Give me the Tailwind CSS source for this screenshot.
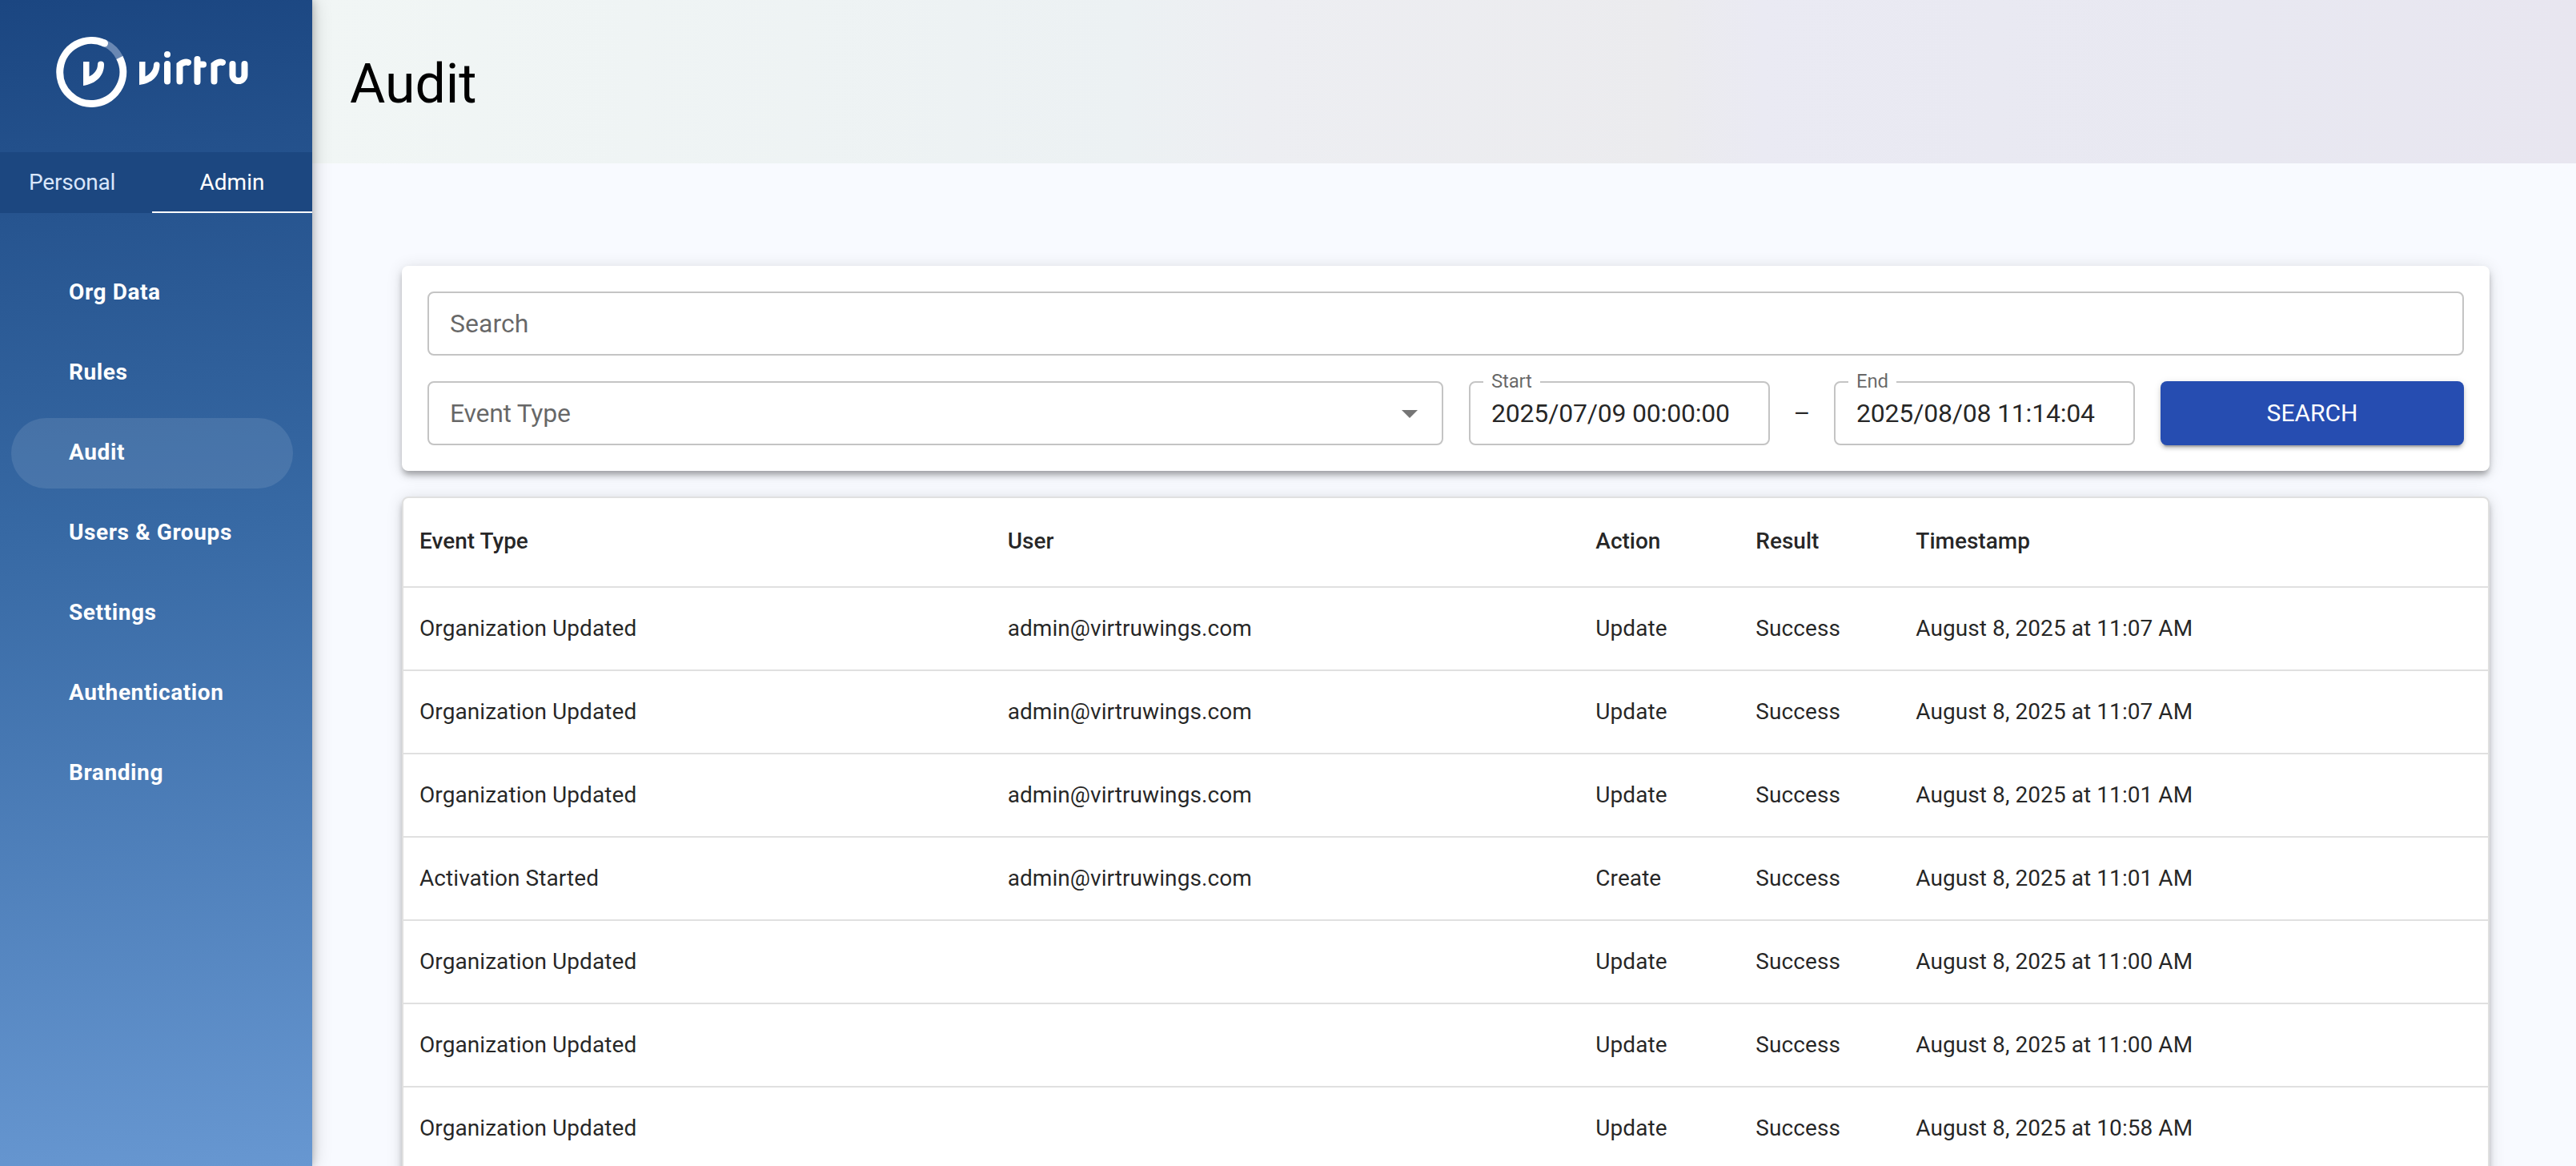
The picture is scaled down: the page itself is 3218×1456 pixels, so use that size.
<!DOCTYPE html>
<html lang="en">
<head>
  <meta charset="UTF-8">
  <title>Audit</title>
  <script src="https://cdn.jsdelivr.net/npm/@tailwindcss/browser@4"></script>
</head>
<body class="bg-[#f8faff] text-black/87 font-[Roboto,sans-serif]">

  <div class="flex h-[1456px] overflow-hidden">

    <!-- Sidebar -->
    <aside class="relative z-10 w-[390px] shrink-0 text-white bg-linear-[175deg] from-[#1b4681] via-[#3769a4] via-45% to-[#6797d1] shadow-[0_0_10px_rgba(0,0,0,0.25),0_0_24px_rgba(0,0,0,0.2)]">
      <div class="h-[190px] pt-[46px] pl-[70px]">
        <svg class="w-[240px] h-[88px]" viewBox="0 0 240 88" fill="none" stroke="#fff" stroke-width="8" stroke-linecap="round">
          <path d="M61 8 A39.5 39.5 0 0 1 80 27" stroke="#6a88b3" stroke-width="9" stroke-linecap="butt" />
          <path d="M60.5 8 A39.5 39.5 0 1 0 79.4 26" stroke-width="9" stroke-linecap="butt" />
          <circle cx="60.5" cy="8" r="4.5" fill="#fff" stroke="none" />
          <path d="M34 31h7.5v18.5c6-3 10.500-8 10.500-15a4 4 0 0 1 8 0C60 49 50 58.500 34 61z" fill="#fff" stroke="none" />
          <path d="M104 31h7.500v18.500c6-3 10.500-8 10.500-15a3.800 3.800 0 0 1 7.500 0C129.500 49 120 58 104 60z" fill="#fff" stroke="none" />
          <circle cx="139" cy="22" r="4" fill="#fff" stroke="none" />
          <path d="M139 34v21.500M154.500 55.500V35q6-4.500 10.500-3M176.500 28v28M176.500 34.500H184M197.500 55.500V35q6-4.500 10.500-3M220.500 34v13.500a7.500 7.500 0 0 0 15 0V34" />
        </svg>
      </div>
      <div class="flex h-[76px] bg-[#1c4780] text-[28px] leading-[76px]">
        <div class="w-[190px] pl-9 tracking-[-0.2px] text-[#d9e6fb]">Personal</div>
        <div class="w-[200px] text-center border-b-2 border-white">Admin</div>
      </div>
      <nav class="flex flex-col gap-3 mt-[56px] pl-[14px] pr-6 text-[28px] leading-[86px] font-bold tracking-[0.6px]">
        <a class="h-[88px] pl-[72px]">Org Data</a>
        <a class="h-[88px] pl-[72px]">Rules</a>
        <a class="h-[88px] pl-[72px] rounded-full bg-white/10">Audit</a>
        <a class="h-[88px] pl-[72px]">Users &amp; Groups</a>
        <a class="h-[88px] pl-[72px]">Settings</a>
        <a class="h-[88px] pl-[72px]">Authentication</a>
        <a class="h-[88px] pl-[72px]">Branding</a>
      </nav>
    </aside>

    <main class="flex-1">
      <header class="h-[204px] pl-[47px] bg-[linear-gradient(90deg,#f1f6f5,#ecf1f3_36%,#edeef2_42%,#ebebee_60%,#eaeaf3_64%,#e8e8f1_85%,#e8e6f0)]">
        <h1 class="text-[68px] leading-[210px] text-black">Audit</h1>
      </header>

      <div class="mt-32 ml-[112px] mr-[108px]">
        <!-- Filters -->
        <section class="h-[256px] p-8 rounded-lg bg-white shadow-[0_6px_6px_-2px_rgba(0,0,0,0.2),0_6px_10px_rgba(0,0,0,0.14),0_2px_20px_rgba(0,0,0,0.12)]">
          <div class="h-20 px-[26px] border-2 border-[#c4c4c4] rounded-lg text-[32px] leading-[76px] text-black/60">Search</div>
          <div class="flex mt-8 h-20 text-[32px] leading-[76px]">
            <div class="flex items-center justify-between flex-1 pl-[26px] pr-4 border-2 border-[#c4c4c4] rounded-lg text-black/60">
              <span class="tracking-[-0.3px]">Event Type</span>
              <svg class="w-12 h-12" viewBox="0 0 24 24" fill="#757575"><path d="M7 10l5 5 5-5z" /></svg>
            </div>
            <div class="relative w-[376px] ml-8 pl-[26px] border-2 border-[#c4c4c4] rounded-lg tracking-[-0.2px]">
              <span class="absolute -top-4 left-4 px-[10px] bg-white text-[24px] leading-[28px] text-black/60">Start</span>
              2025/07/09 00:00:00
            </div>
            <div class="w-20 text-center leading-[80px]">–</div>
            <div class="relative w-[376px] pl-[26px] border-2 border-[#c4c4c4] rounded-lg tracking-[-0.2px]">
              <span class="absolute -top-4 left-4 px-[10px] bg-white text-[24px] leading-[28px] text-black/60">End</span>
              2025/08/08 11:14:04
            </div>
            <button class="w-[379px] ml-8 rounded-lg bg-[#264db1] text-white text-[30px] shadow-[0_6px_2px_-4px_rgba(0,0,0,0.2),0_4px_4px_rgba(0,0,0,0.14),0_2px_10px_rgba(0,0,0,0.12)]">SEARCH</button>
          </div>
        </section>

        <!-- Events -->
        <section class="mt-8 h-[900px] border-2 border-[#e0e0e0] rounded-lg bg-white text-[28px] shadow-[0_6px_6px_-2px_rgba(0,0,0,0.2),0_6px_10px_rgba(0,0,0,0.14),0_2px_20px_rgba(0,0,0,0.12)]">
          <div class="grid grid-cols-[1fr_1fr_200px_200px_1fr] h-[112px] border-b-2 border-[#e0e0e0] leading-[108px] font-medium *:pl-5">
            <div>Event Type</div>
            <div>User</div>
            <div>Action</div>
            <div>Result</div>
            <div>Timestamp</div>
          </div>
          <div id="rows"></div>
        </section>
      </div>
    </main>
  </div>

  <script>
    const events = [
      ["Organization Updated", "admin@virtruwings.com", "Update", "Success", "August 8, 2025 at 11:07 AM"],
      ["Organization Updated", "admin@virtruwings.com", "Update", "Success", "August 8, 2025 at 11:07 AM"],
      ["Organization Updated", "admin@virtruwings.com", "Update", "Success", "August 8, 2025 at 11:01 AM"],
      ["Activation Started", "admin@virtruwings.com", "Create", "Success", "August 8, 2025 at 11:01 AM"],
      ["Organization Updated", "", "Update", "Success", "August 8, 2025 at 11:00 AM"],
      ["Organization Updated", "", "Update", "Success", "August 8, 2025 at 11:00 AM"],
      ["Organization Updated", "", "Update", "Success", "August 8, 2025 at 10:58 AM"],
    ];

    document.getElementById("rows").innerHTML = events.map((row) => `
      <div class="grid grid-cols-[1fr_1fr_200px_200px_1fr] h-[104px] border-b-2 border-[#e0e0e0] leading-[102px] tracking-[0.07px] *:pl-5">
        ${row.map((cell) => `<div>${cell}</div>`).join("")}
      </div>`).join("");
  </script>
</body>
</html>
